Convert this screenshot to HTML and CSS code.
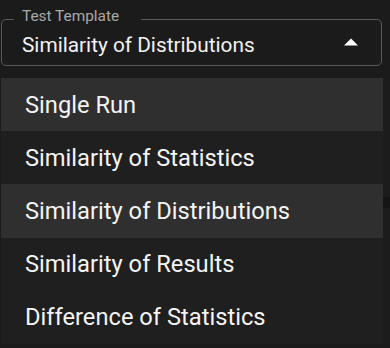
FILE: index.html
```html
<!DOCTYPE html>
<html lang="en">
<head>
  <meta charset="UTF-8"/>
  <meta name="viewport" content="width=device-width, initial-scale=1.0"/>
  <title>Test Template</title>
  <link rel="stylesheet" href="styles.css">
</head>
<body>
  <div class="page">
    <fieldset class="select-field">
      <legend>Test Template</legend>
      <div class="select-value">
        <span>Similarity of Distributions</span>
        <svg class="arrow" width="14" height="8" viewBox="0 0 14 8">
          <path d="M0 7.5 L7 0.5 L14 7.5 Z" fill="#fff"/>
        </svg>
      </div>
    </fieldset>

    <div class="menu-area">
      <ul class="menu">
        <li class="menu-item active">Single Run</li>
        <li class="menu-item">Similarity of Statistics</li>
        <li class="menu-item active">Similarity of Distributions</li>
        <li class="menu-item">Similarity of Results</li>
        <li class="menu-item">Difference of Statistics</li>
      </ul>
      <div class="backdrop">
        <div class="backdrop-edge"></div>
      </div>
    </div>
  </div>
</body>
</html>
```

FILE: styles.css
```css
* {
  box-sizing: border-box;
}

body {
  margin: 0;
  background: #1b1b1b;
  font-family: Roboto, 'Noto Sans', sans-serif;
  color: #f2f2f2;
}

.page {
  width: 390px;
  height: 348px;
  overflow: hidden;
}

/* outlined select with notched label */
.select-field {
  margin: 9px 8px 0 1px;
  padding: 0;
  min-width: 0;
  height: 57px;
  border: 1px solid #5a5a5a;
  border-radius: 5px;
}

.select-field legend {
  margin-left: 12px;
  padding: 0 22px 5px 8px;
  font-size: 15.4px;
  line-height: 15px;
  color: #a9a9a9;
}

.select-value {
  display: flex;
  align-items: center;
  justify-content: space-between;
  padding: 0 23px 0 20px;
  height: 32px;
  font-size: 20.8px;
}

.arrow {
  display: block;
  margin-bottom: 6px;
}

.menu-area {
  display: flex;
  margin-top: 12px;
}

.menu {
  list-style: none;
  margin: 0 0 0 1px;
  padding: 0;
  width: 382px;
  background: #1f1f1f;
}

.menu-item {
  height: 53.2px;
  padding-left: 24px;
  display: flex;
  align-items: center;
  font-size: 23.7px;
  color: #f4f4f4;
}

.menu-item.active {
  background: #2f2f2f;
}

.backdrop {
  flex: 1;
  background: #1c1c1c;
  padding-top: 119px;
}

.backdrop-edge {
  height: 11px;
  background: #151515;
}
```
